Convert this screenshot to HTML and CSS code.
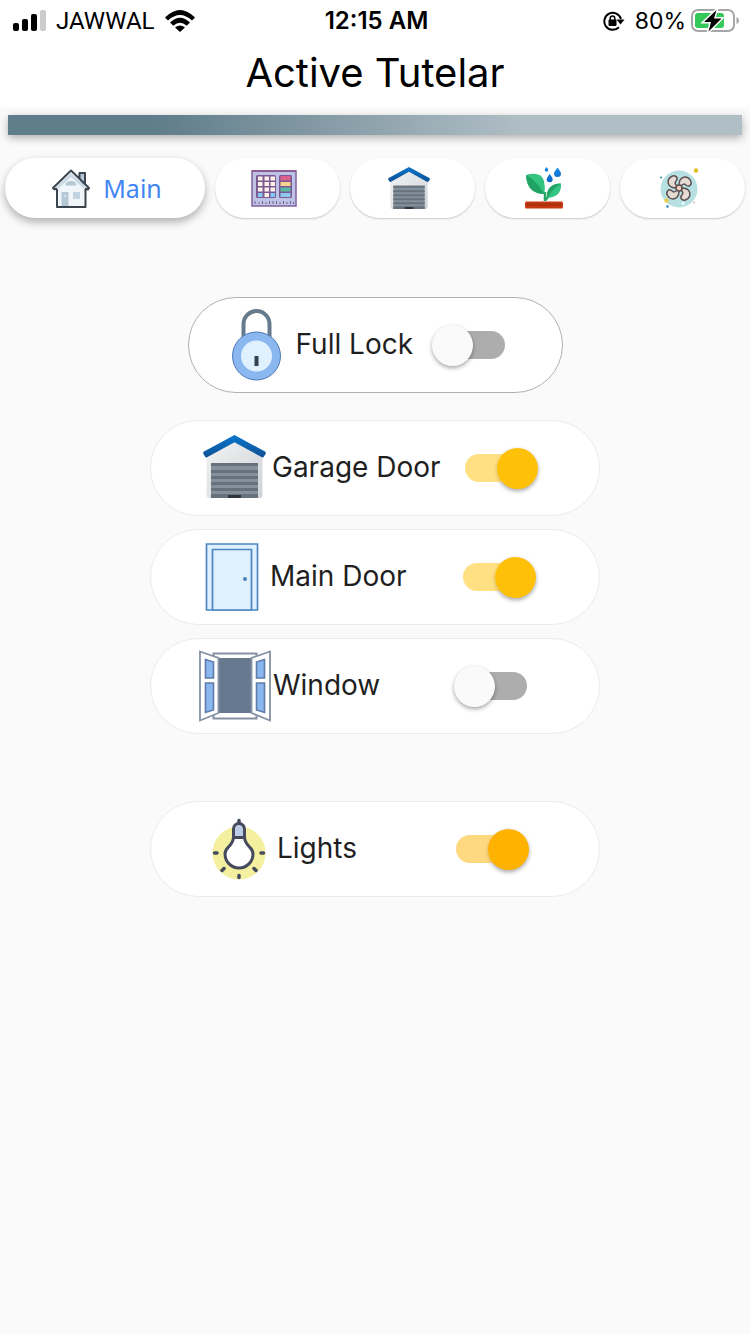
FILE: index.html
```html
<!DOCTYPE html>
<html lang="en">
<head>
  <meta charset="UTF-8" />
  <meta name="viewport" content="width=device-width, initial-scale=1.0"/>
  <title>Active Tutelar</title>
  <link rel="stylesheet" href="styles.css">
</head>
<body>

<!-- shared icons -->
<svg class="defs" width="0" height="0" aria-hidden="true">
  <defs>
    <linearGradient id="roof" x1="0" y1="0" x2="0" y2="1">
      <stop offset="0" stop-color="#0b76cc"/><stop offset="1" stop-color="#0d5194"/>
    </linearGradient>
    <linearGradient id="wall" x1="0" y1="0" x2="1" y2="1">
      <stop offset="0" stop-color="#f2f3f4"/><stop offset="1" stop-color="#cfd2d6"/>
    </linearGradient>
    <linearGradient id="drop" x1="0" y1="0" x2="0" y2="1">
      <stop offset="0" stop-color="#1a8fe8"/><stop offset="1" stop-color="#0b62c4"/>
    </linearGradient>
  </defs>
  <symbol id="garage" viewBox="0 0 63 63">
    <path d="M3.5 20L31.5 5L59.5 20V60a3 3 0 0 1-3 3H6.5a3 3 0 0 1-3-3z" fill="url(#wall)"/>
    <path d="M8 28h47v35H8z" fill="#84909b"/>
    <path d="M8 28h47v3H8zM8 35h47v3H8zM8 41h47v3H8zM8 47h47v3H8zM8 53h47v3H8zM8 59h47v4H8z" fill="#66717c"/>
    <path d="M25 60h13v3H25z" fill="#30353b"/>
    <path d="M31.5 0L62 16.5q1.500 1 .5 2.500l-1.500 2.500q-1 1.500-2.500.5L31.500 7.200L4.500 22q-1.500 1-2.500-.5L.5 19q-1-1.500.5-2.500z" fill="url(#roof)"/>
  </symbol>
</svg>

<header class="header">
  <div class="status">
    <div class="status-left">
      <svg width="33" height="22" viewBox="0 0 33 22" aria-hidden="true">
        <rect x="0" y="13" width="6" height="8" rx="2"/>
        <rect x="9" y="9" width="6" height="12" rx="2"/>
        <rect x="18" y="4" width="6" height="17" rx="2"/>
        <rect x="27" y="0" width="6" height="21" rx="2" fill="#ccc"/>
      </svg>
      <span class="carrier">JAWWAL</span>
      <svg width="30" height="22" viewBox="0 0 30 22" aria-hidden="true">
        <path d="M0 7.5Q15-7.5 30 7.5L27 10.500Q15-.5 3 10.500z"/>
        <path d="M5 12.500Q15 3 25 12.500L21.700 15.700Q15 10 8.300 15.700z"/>
        <path d="M10 17.500Q15 13.300 20 17.500L15 22z"/>
      </svg>
    </div>
    <div class="time">12:15 AM</div>
    <div class="status-right">
      <svg width="22" height="20" viewBox="0 0 22 20" aria-hidden="true">
        <path d="M15.900 16.300A8.500 8.500 0 1 1 18 8" fill="none" stroke="#000" stroke-width="2"/>
        <path d="M13.500 8.500H21.500L17.500 13.500z"/>
        <rect x="5.500" y="8.500" width="8" height="6.500" rx="1"/>
        <path d="M7.200 9V7.200a2.300 2.300 0 0 1 4.600 0V9" fill="none" stroke="#000" stroke-width="1.500"/>
      </svg>
      <span>80%</span>
      <svg width="49" height="24" viewBox="0 0 49 24" aria-hidden="true">
        <rect x="1" y="1" width="42" height="21" rx="6" fill="#fff" stroke="#a6a6a8" stroke-width="2"/>
        <rect x="4" y="4" width="29" height="15" rx="3" fill="#34c759"/>
        <path d="M45.500 8q2.500 1 2.500 3.500t-2.500 3.500z" fill="#a6a6a8"/>
        <path d="M25.500 1L13 13h7L17.500 22.500L30.500 9.500H23z" stroke="#fff" stroke-width="3" paint-order="stroke"/>
      </svg>
    </div>
  </div>
  <h1>Active Tutelar</h1>
</header>

<div class="strip"></div>

<nav class="tabs">
  <button class="tab active" type="button">
    <svg width="38" height="39" viewBox="0 0 38 39" aria-hidden="true">
      <path d="M28 4h4v13l-4-4z" fill="#b4c8d6"/>
      <path d="M5 19L19 5L33 19V37.500H5z" fill="#f1f6fa"/>
      <path d="M4 18L19 4L34 18L31 19L19 8L7 19z" fill="#c9d9e4"/>
      <path d="M13.500 16.500q0-4.500 5.500-4.500t5.500 4.500z" fill="#b4c8d6"/>
      <path d="M9.500 23h7v14h-7z" fill="#b4c8d6"/>
      <path d="M12 27h2" stroke="#fff"/>
      <path d="M21 23h7v7h-7z" fill="#c3d3df"/>
      <path d="M5 20V38H33.500V20M2 20.500L1 19L19 1.500L37 19L36 20.500L33 19.500M2 20.500L5 19.500M27.500 9.500V4H33V15" fill="none" stroke="#3b444f" stroke-width="2" stroke-linejoin="round"/>
    </svg>
    <span>Main</span>
  </button>
  <button class="tab" type="button" aria-label="Keypad">
    <svg width="46" height="37" viewBox="0 0 46 37" aria-hidden="true">
      <rect x="1" y="1" width="44" height="35" fill="#bdc3e4" stroke="#80609e" stroke-width="1.500"/>
      <path d="M1 1h44" stroke="#8a5287" stroke-width="1.500"/>
      <rect x="5" y="5" width="20" height="23" rx="1.500" fill="#7b5a94"/>
      <path d="M7 6.500h4.500v4H7zM13.500 6.500H18v4h-4.500zM19.500 6.500H24v4h-4.500zM7 12h4.500v4H7zM13.500 12H18v4h-4.500zM19.500 12H24v4h-4.500zM7 17.500h4.500v4H7zM13.500 17.500H18v4h-4.500zM19.500 17.500H24v4h-4.500zM13.500 23H18v4h-4.500z" fill="#fff1e8"/>
      <path d="M7 23h4.500v4H7zM19.500 23H24v4h-4.500z" fill="#83c9f5"/>
      <rect x="28" y="5" width="13" height="23" rx="1.500" fill="#7b5a94"/>
      <path d="M29.500 6h10v4.500h-10z" fill="#dc5f8e"/>
      <path d="M29.500 12h10v4h-10z" fill="#f5d38c"/>
      <path d="M29.500 17.500h10v4h-10z" fill="#5ab8a0"/>
      <path d="M29.500 23h10v4h-10z" fill="#8bc8ec"/>
      <path d="M4 31v3M8 32v2M11.500 31v3M15 32v2M18.500 31v3M22 31v3M25.500 31v3M29 32v2M32.500 31v3M36 32v2M39.500 31v3M42.500 32v2" stroke="#7b5a94"/>
    </svg>
  </button>
  <button class="tab" type="button" aria-label="Garage">
    <svg width="42" height="42" aria-hidden="true"><use href="#garage"/></svg>
  </button>
  <button class="tab" type="button" aria-label="Garden">
    <svg width="38" height="42" viewBox="0 0 38 42" aria-hidden="true">
      <path d="M20 34V25M20.500 33L29 23" stroke="#27a567" stroke-width="2.500" fill="none"/>
      <path d="M1 8Q16 4 19 14Q20.500 20 19.500 27Q2 27 1 8z" fill="#33c481"/>
      <path d="M1 8Q10 12 19.500 27Q2 27 1 8z" fill="#21a366"/>
      <path d="M36 16.500Q37 30 22 31Q21 17 36 16.500z" fill="#33c481"/>
      <path d="M36 16.500Q28 21 22 31Q21 17 36 16.500z" fill="#21a366"/>
      <rect x="0" y="34.500" width="38" height="7" rx="1.500" fill="#c4390f"/>
      <path d="M2 36.500h34v2.500H2z" fill="#ae300c"/>
      <path d="M32.500.5Q36 5 36 6.500a3.500 3.500 0 0 1-7 0Q29 5 32.500.5zM24.700 7Q27.700 11 27.700 12.300a3 3 0 0 1-6 0Q21.700 11 24.700 7zM21.500 0Q23.300 2 23.300 3a1.800 1.800 0 0 1-3.600 0Q19.700 2 21.500 0z" fill="url(#drop)"/>
    </svg>
  </button>
  <button class="tab" type="button" aria-label="Fan">
    <svg width="39" height="40" viewBox="0 0 39 40" aria-hidden="true">
      <circle cx="19" cy="21" r="18.500" fill="#b6e0e2"/>
      <g fill="#e7dbd5" stroke="#5d5050" stroke-width="1.500">
        <path id="blade" d="M17.500 18C14.500 16.500 14.500 14.500 16.500 12.500C18.500 9.500 15 6.500 11.500 8.500C6.500 11.500 6.500 19.500 15.500 20z"/>
        <use href="#blade" transform="rotate(90 19 20)"/>
        <use href="#blade" transform="rotate(180 19 20)"/>
        <use href="#blade" transform="rotate(270 19 20)"/>
        <circle cx="19" cy="20" r="3" fill="#f0cfc2"/>
      </g>
      <circle cx="36" cy="2.500" r="2.200" fill="#e0be1f"/>
      <circle cx="6.500" cy="32.500" r="2.300" fill="#e8cc55"/>
      <circle cx="1" cy="9.500" r="1" fill="#2b8c99"/>
      <circle cx="7.500" cy="38.500" r="1.200" fill="#2678bb"/>
      <circle cx="34" cy="34.500" r="1" fill="#e6b9a6"/>
      <circle cx="23" cy="35.500" r="1.300" fill="#fff"/>
    </svg>
  </button>
</nav>

<main class="controls">
  <div class="card lock">
    <svg class="icon" viewBox="0 0 72 72" aria-hidden="true">
      <path d="M21.500 30V15a13 13 0 0 1 26 0V30" fill="none" stroke="#667a8e" stroke-width="4"/>
      <circle cx="34.500" cy="47" r="24" fill="#8bb7f0" stroke="#4e7ab5"/>
      <circle cx="34.500" cy="47" r="15.500" fill="#dff0fe"/>
      <path d="M32.500 47h4v10h-4z" fill="#36404d"/>
    </svg>
    <label for="full-lock">Full Lock</label>
    <input type="checkbox" class="switch" id="full-lock">
  </div>

  <div class="openings">
    <div class="card garage">
      <svg class="icon" viewBox="0 0 72 72" aria-hidden="true"><use href="#garage" x="5" y="3" width="63" height="63"/></svg>
      <label for="garage-door">Garage Door</label>
      <input type="checkbox" class="switch" id="garage-door" checked>
    </div>
    <div class="card door">
      <svg class="icon" viewBox="0 0 72 72" aria-hidden="true">
        <g fill="#dff0fe" stroke="#4e86c4" stroke-width="1.700">
          <path d="M10.500 3h51v66h-51z"/>
          <path d="M16.500 8.500h39V69h-39z"/>
        </g>
        <circle cx="49" cy="38" r="2" fill="#4a80b8"/>
      </svg>
      <label for="main-door">Main Door</label>
      <input type="checkbox" class="switch" id="main-door" checked>
    </div>
    <div class="card window">
      <svg class="icon" viewBox="0 0 72 72" aria-hidden="true">
        <path d="M14.500 3.500h43v65h-43z" fill="#fff" stroke="#8492a3" stroke-width="2"/>
        <path d="M19 8h33v55H19z" fill="#66798f"/>
        <g fill="#fff" stroke="#8492a3" stroke-width="1.800">
          <path d="M1 1.500L19.500 8V63L1 70.500z"/>
          <path d="M71 1.500L52.500 8V63L71 70.500z"/>
        </g>
        <g fill="#8bb7f0" stroke="#5d7ca8" stroke-width="1.600">
          <path d="M6.500 9.500L14.500 12V28H6.500zM6.500 33h8V60L6.500 62.500z"/>
          <path d="M65.500 9.500L57.500 12V28H65.500zM65.500 33h-8V60L65.500 62.500z"/>
        </g>
      </svg>
      <label for="window">Window</label>
      <input type="checkbox" class="switch" id="window">
    </div>
  </div>

  <div class="card lights">
    <svg class="icon" viewBox="0 0 72 72" aria-hidden="true">
      <circle cx="36" cy="40" r="26.500" fill="#f4f0a0"/>
      <path d="M30 23.500C30 34 22 33 22 41a14 14 0 0 0 28 0C50 33 42 34 42 23.500z" fill="#fff"/>
      <path d="M30.500 24V15l5.500-5l5.500 5v9z" fill="#bccbe6"/>
      <g fill="none" stroke="#454b5c" stroke-width="3.500" stroke-linecap="round">
        <path d="M30.500 16V23.500C30.500 34 22 33 22 41a14 14 0 0 0 28 0C50 33 41.500 34 41.500 23.500V16a5.500 5.500 0 0 0-11 0zM30.500 24.500h11" stroke-width="3"/>
        <path d="M36 7.500V10M11.500 40h2.500M58 40h2.500M19 57.500l2-2M53 57.500l-2-2M36 62.500v2"/>
      </g>
    </svg>
    <label for="lights">Lights</label>
    <input type="checkbox" class="switch amber" id="lights" checked>
  </div>
</main>

</body>
</html>
```

FILE: styles.css
```css
* { box-sizing: border-box; }
body { font-family: Inter, sans-serif; margin: 0; min-height: 100vh; background: #fafafa; color: #1f1f1f; }
.defs { display: block; }

.header { background: #fff; color: #000; padding-bottom: 10px; }
.status { display: grid; grid-template-columns: 1fr auto 1fr; align-items: center; height: 41px; padding: 0 10px 0 13px; font-size: 24px; }
.status-left, .status-right { display: flex; align-items: center; }
.status-left { gap: 10px; }
.status-right { gap: 5px; justify-content: flex-end; }
.status-right span { margin-left: 5px; font-size: 23px; }
.carrier { font-family: Roboto, sans-serif; }
.time { font-weight: 600; }
h1 { margin: 0; padding-top: 8px; font-size: 40px; line-height: 48px; font-weight: 400; text-align: center; }

.strip { height: 20px; margin: 8px 8px 0; background: linear-gradient(90deg, #607d8b 20%, #b0bec5 70%); box-shadow: 0 3px 8px rgba(0,0,0,0.3); }

.tabs { display: grid; grid-template-columns: 8fr 5fr 5fr 5fr 5fr; gap: 10px; padding: 0 5px; margin-top: 23px; }
.tab { display: flex; align-items: center; justify-content: center; gap: 13px; height: 60px; padding: 0 7px 0 0; border: 0; border-radius: 30px; background: #fff; box-shadow: 0 1px 2px rgba(0,0,0,0.2); cursor: pointer; }
.tab.active { padding: 0 0 0 4px; box-shadow: 0 4px 8px rgba(0,0,0,0.3); color: #4285f4; font-family: "Noto Sans", sans-serif; font-size: 25px; }

.controls { display: flex; flex-direction: column; align-items: center; padding: 79px 0 40px; }
.openings { display: flex; flex-direction: column; gap: 13px; width: 60%; margin: 27px 0 67px; }
.card { display: flex; align-items: center; gap: 2px; width: 100%; height: 96px; border: 1px solid #ebebeb; border-radius: 48px; background: #fff; font-size: 28px; }
.card label { padding-bottom: 2px; white-space: nowrap; }
.icon { width: 72px; height: 72px; flex: none; }
.lock { width: 50%; padding: 0 57px 0 33px; border-color: #b0b0b0; }
.garage { padding: 0 61px 0 47px; }
.door { padding: 0 63px 0 45px; }
.window { padding: 0 72px 0 48px; }
.lights { width: 60%; padding: 0 70px 0 52px; }

.switch { appearance: none; display: grid; align-items: center; flex: none; width: 73px; height: 41px; margin: 0 0 0 auto; color: #ffc107; cursor: pointer; }
.switch.amber { color: #ffb300; }
.switch::before, .switch::after { content: ""; grid-area: 1 / 1; }
.switch::before { height: 28px; margin-left: 7px; border-radius: 14px; background: #adadad; }
.switch::after { width: 41px; height: 41px; border-radius: 50%; background: #fafafa; box-shadow: 0 2px 4px rgba(0,0,0,0.35); }
.switch:checked::before { margin: 0 7px 0 0; background: currentColor; opacity: 0.5; }
.switch:checked::after { justify-self: end; background: currentColor; }
```
